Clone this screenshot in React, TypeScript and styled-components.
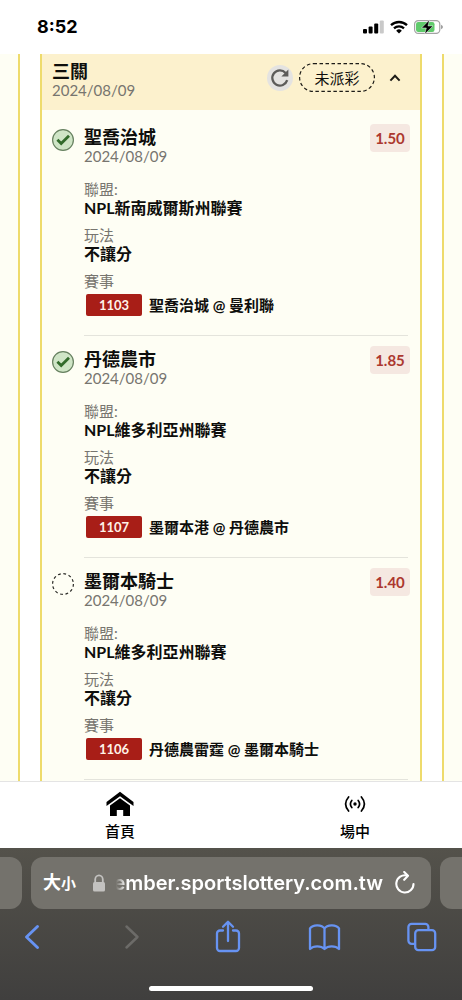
import React from 'react';
import styled, { createGlobalStyle } from 'styled-components';

const textFont = 'Lato, "Noto Sans CJK TC", sans-serif';
const systemFont = 'Inter, "Noto Sans CJK TC", sans-serif';

const GlobalStyle = createGlobalStyle`
  *, *::before, *::after { box-sizing: border-box; }
  body { margin: 0; background: #fff; color: #0e0e0c; font-family: ${textFont}; }
  button { font: inherit; color: inherit; background: none; border: 0; padding: 0; margin: 0; cursor: pointer; }
  svg { display: block; flex: none; }
  h1, h2, dl, dd, ul { margin: 0; padding: 0; }
`;

const Screen = styled.div`
  display: flex;
  flex-direction: column;
  height: 100vh;
`;

const StatusBar = styled.header`
  display: flex;
  flex: none;
  align-items: center;
  justify-content: space-between;
  height: 54px;
  padding: 0 19px 0 37px;
  background: #fff;
  font-family: ${systemFont};
`;

const Clock = styled.time`
  color: #000;
  font-size: 18px;
  line-height: 22px;
  font-weight: 700;
`;

const StatusIcons = styled.div`
  display: flex;
  align-items: center;
  gap: 6px;
`;

const Carousel = styled.main`
  display: flex;
  flex: 1;
  gap: 20px;
  min-height: 0;
  overflow: hidden;
`;

const PeekCard = styled.div<{ $side: 'left' | 'right' }>`
  flex: none;
  width: 20px;
  background: #fefef4;
  border: 0 solid #eedb6c;
  border-${(p) => (p.$side === 'left' ? 'right' : 'left')}-width: 2px;
`;

const TicketCard = styled.section`
  flex: 1;
  min-width: 0;
  background: #fefef4;
  border: 0 solid #eedb6c;
  border-width: 0 2px;
  overflow: hidden;
`;

const TicketHeader = styled.div`
  display: flex;
  align-items: flex-start;
  justify-content: space-between;
  padding: 6px 18px 12px 10px;
  background: #fcf1cd;
`;

const Title = styled.h1`
  font-size: 18px;
  line-height: 22px;
  font-weight: 700;
`;

const LegTitle = styled.h2`
  font-size: 18px;
  line-height: 22px;
  font-weight: 700;
`;

const DateText = styled.time`
  display: block;
  color: #77756f;
  font-size: 15px;
  line-height: 16px;
`;

const HeaderActions = styled.div`
  display: flex;
  align-items: center;
  gap: 6px;
  padding-top: 3px;
`;

const RoundButton = styled.button`
  display: grid;
  place-items: center;
  width: 26px;
  height: 26px;
  border-radius: 50%;
  background: #e4e3e1;
`;

const StatusPill = styled.span`
  position: relative;
  display: grid;
  place-items: center;
  width: 76px;
  height: 29px;
  font-size: 15px;
  line-height: 20px;
`;

const PillOutline = styled.svg`
  position: absolute;
  inset: 0;
`;

const ToggleButton = styled.button`
  display: grid;
  place-items: center;
  width: 14px;
  height: 26px;
  margin-left: 7px;
`;

const LegList = styled.ul`
  padding-top: 4px;
  list-style: none;
`;

const Leg = styled.li`
  display: flex;
  gap: 10px;
  padding: 12px 10px 0;
`;

const LegState = styled.span`
  padding-top: 3px;
`;

const LegContent = styled.div`
  flex: 1;
  min-width: 0;
`;

const LegHeading = styled.div`
  display: flex;
  align-items: flex-start;
  justify-content: space-between;
`;

const Odds = styled.strong`
  display: grid;
  place-items: center;
  width: 40px;
  height: 28px;
  margin-top: -2px;
  border-radius: 4px;
  background: #f5e8e1;
  color: #ac382f;
  font-size: 15px;
  line-height: 20px;
  font-weight: 700;
`;

const Facts = styled.dl`
  display: grid;
  gap: 8px;
  margin-right: 2px;
  padding: 16px 0 19px;
  border-bottom: 1px solid #e4e4dc;
`;

const FactLabel = styled.dt`
  color: #77756f;
  font-size: 15px;
  line-height: 18px;
`;

const FactValue = styled.dd`
  font-size: 16px;
  line-height: 20px;
  font-weight: 700;
`;

const MatchValue = styled.dd`
  display: flex;
  align-items: center;
  gap: 7px;
  margin: 4px 0 0 2px;
  font-size: 15px;
  line-height: 22px;
  font-weight: 700;
`;

const MatchCode = styled.span`
  width: 56px;
  border-radius: 2px;
  background: #a81e17;
  color: #fff2e8;
  font-size: 13px;
  text-align: center;
`;

const SiteNav = styled.nav`
  display: flex;
  flex: none;
  justify-content: space-between;
  height: 67px;
  padding: 9px 71px 0 84px;
  border-top: 1px solid #e4e4e4;
  background: #fff;
`;

const NavLink = styled.a`
  display: flex;
  flex-direction: column;
  align-items: center;
  gap: 4px;
  width: 72px;
  color: #000;
  font-size: 15px;
  line-height: 20px;
  font-weight: 500;
  text-decoration: none;
`;

const Browser = styled.footer`
  flex: none;
  padding: 9px 0;
  background: linear-gradient(#54524b, #403f3e);
  color: #fff;
  font-family: ${systemFont};
`;

const TabStrip = styled.div`
  display: flex;
  gap: 9px;
`;

const PeekTab = styled.div<{ $side: 'left' | 'right' }>`
  flex: none;
  width: 22px;
  height: 52px;
  border-radius: ${(p) => (p.$side === 'left' ? '0 12px 12px 0' : '12px 0 0 12px')};
  background: #74726c;
`;

const AddressBar = styled.div`
  display: flex;
  flex: 1;
  align-items: center;
  min-width: 0;
  height: 52px;
  padding: 0 16px 0 12px;
  border-radius: 12px;
  background: #74726c;
`;

const TextSizeButton = styled.button`
  display: flex;
  align-items: baseline;
  margin-right: 16px;
  font-size: 18px;
  line-height: 24px;
  font-weight: 700;
`;

const SmallGlyph = styled.span`
  font-size: 15px;
`;

const Address = styled.input`
  flex: 1;
  min-width: 0;
  margin: 0 12px 0 3px;
  padding: 0;
  border: 0;
  outline: 0;
  background: none;
  color: #fff;
  font-family: ${systemFont};
  font-size: 20px;
  line-height: 28px;
  font-weight: 600;
  font-variant-ligatures: none;
  text-align: right;
  mask-image: linear-gradient(90deg, transparent 7px, #000 17px);
`;

const Toolbar = styled.div`
  display: flex;
  justify-content: space-between;
  padding: 8px 21px 0 12px;
  color: #6793f2;
`;

const ToolButton = styled.button`
  width: 40px;
  height: 40px;
  &:disabled { color: #6c6b68; }
`;

const HomeIndicator = styled.div`
  width: 164px;
  height: 5px;
  margin: 29px auto 0;
  border-radius: 3px;
  background: #fff;
`;

type LegData = { team: string; odds: string; league: string; code: string; match: string; won: boolean };

const legs: LegData[] = [
  { team: '聖喬治城', odds: '1.50', league: 'NPL新南威爾斯州聯賽', code: '1103', match: '聖喬治城 @ 曼利聯', won: true },
  { team: '丹德農市', odds: '1.85', league: 'NPL維多利亞州聯賽', code: '1107', match: '墨爾本港 @ 丹德農市', won: true },
  { team: '墨爾本騎士', odds: '1.40', league: 'NPL維多利亞州聯賽', code: '1106', match: '丹德農雷霆 @ 墨爾本騎士', won: false },
];

const WonIcon = () => (
  <svg width="22" height="22" viewBox="0 0 22 22" fill="none" role="img" aria-label="過關">
    <circle cx="11" cy="11" r="10.4" fill="#cfe5c6" stroke="#66805f" strokeWidth="1.2" />
    <path d="M5.400 10.800l3.800 3.800L17 6.800" stroke="#326b2b" strokeWidth="2.800" />
  </svg>
);

const PendingIcon = () => (
  <svg width="22" height="22" viewBox="0 0 22 22" fill="none" role="img" aria-label="未開賽">
    <circle cx="11" cy="11" r="10.4" stroke="#2a2a26" strokeWidth="1.2" strokeDasharray="2.800 2.650" />
  </svg>
);

const LegItem = ({ leg }: { leg: LegData }) => (
  <Leg>
    <LegState>{leg.won ? <WonIcon /> : <PendingIcon />}</LegState>
    <LegContent>
      <LegHeading>
        <div>
          <LegTitle>{leg.team}</LegTitle>
          <DateText dateTime="2024-08-09">2024/08/09</DateText>
        </div>
        <Odds>{leg.odds}</Odds>
      </LegHeading>
      <Facts>
        <div>
          <FactLabel>聯盟:</FactLabel>
          <FactValue>{leg.league}</FactValue>
        </div>
        <div>
          <FactLabel>玩法</FactLabel>
          <FactValue>不讓分</FactValue>
        </div>
        <div>
          <FactLabel>賽事</FactLabel>
          <MatchValue>
            <MatchCode>{leg.code}</MatchCode>
            <span>{leg.match}</span>
          </MatchValue>
        </div>
      </Facts>
    </LegContent>
  </Leg>
);

export default function App() {
  return (
    <Screen>
      <GlobalStyle />
      <StatusBar>
        <Clock>8:52</Clock>
        <StatusIcons>
          <svg width="21" height="14" viewBox="0 0 21 14" fill="#000">
            <rect x="0" y="9" width="4" height="4.500" rx="1" />
            <rect x="5.600" y="6.500" width="4" height="7" rx="1" />
            <rect x="11.200" y="3.500" width="4" height="10" rx="1" />
            <rect x="16.800" y="0.500" width="4" height="13" rx="1" fill="#c9c9c9" />
          </svg>
          <svg width="18" height="14" viewBox="0 0 18 14" fill="none" stroke="#000" strokeWidth="2.300">
            <path d="M1 5.200a11.600 11.600 0 0 1 16 0" />
            <path d="M4 8.300a7.300 7.300 0 0 1 10 0" />
            <path d="M9 13.500L6.200 10.700a4 4 0 0 1 5.600 0z" fill="#000" stroke="none" />
          </svg>
          <svg width="29" height="16" viewBox="0 0 29 16">
            <rect x="0.600" y="1.600" width="25.200" height="12.800" rx="3.600" fill="#fff" stroke="#a3a3a3" strokeWidth="1.200" />
            <rect x="2" y="3" width="18.500" height="10" rx="2.200" fill="#5fcb6b" />
            <path d="M27.200 5.800q1.600 0.700 1.600 2.200t-1.600 2.200z" fill="#8a8a8a" />
            <path d="M15.500 0.800L7.500 9h4.800l-1.600 6.200L19 6.900h-5z" fill="#000" stroke="#fff" strokeWidth="0.500" />
          </svg>
        </StatusIcons>
      </StatusBar>

      <Carousel>
        <PeekCard $side="left" />
        <TicketCard>
          <TicketHeader>
            <div>
              <Title>三關</Title>
              <DateText dateTime="2024-08-09">2024/08/09</DateText>
            </div>
            <HeaderActions>
              <RoundButton aria-label="重新整理">
                <svg width="20" height="20" viewBox="0 0 20 20" fill="none" stroke="#5d5c5a" strokeWidth="2.300">
                  <path d="M17.200 12.200A7.600 7.600 0 1 1 15.600 4.900" />
                  <path d="M18.400 1.500v7h-7z" fill="#5d5c5a" stroke="none" />
                </svg>
              </RoundButton>
              <StatusPill>
                <PillOutline width="76" height="29" viewBox="0 0 76 29" fill="none" stroke="#1c1b17" strokeWidth="1.200" strokeDasharray="3.500 2.500">
                  <rect x="0.600" y="0.600" width="74.800" height="27.800" rx="13.900" />
                </PillOutline>
                未派彩
              </StatusPill>
              <ToggleButton aria-label="收合">
                <svg width="12" height="8" viewBox="0 0 12 8" fill="none" stroke="#1c1b17" strokeWidth="2">
                  <path d="M1.400 6.600L6 1.800l4.600 4.800" />
                </svg>
              </ToggleButton>
            </HeaderActions>
          </TicketHeader>
          <LegList>
            {legs.map((leg) => (
              <LegItem key={leg.code} leg={leg} />
            ))}
          </LegList>
        </TicketCard>
        <PeekCard $side="right" />
      </Carousel>

      <SiteNav>
        <NavLink href="#home">
          <svg width="28" height="26" viewBox="0 0 28 26">
            <path d="M14 0.800L0.500 11v4L14 5.200L27.500 15v-4z" fill="#000" />
            <path d="M14 7.200L4 14.400V25h6.800v-6h6.400v6H24V14.400z" fill="#000" />
          </svg>
          首頁
        </NavLink>
        <NavLink href="#live">
          <svg width="26" height="26" viewBox="0 0 26 26" fill="none" stroke="#000" strokeWidth="1.700" strokeLinecap="round">
            <circle cx="13" cy="13" r="1.700" fill="#000" stroke="none" />
            <path d="M9.800 9.400q-2.800 3.600 0 7.200M16.200 9.400q2.800 3.600 0 7.200M6.600 6q-6 7 0 14M19.400 6q6 7 0 14" />
          </svg>
          場中
        </NavLink>
      </SiteNav>

      <Browser>
        <TabStrip>
          <PeekTab $side="left" />
          <AddressBar>
            <TextSizeButton aria-label="文字大小">
              大<SmallGlyph>小</SmallGlyph>
            </TextSizeButton>
            <svg width="14" height="18" viewBox="0 0 14 18">
              <path d="M3.200 9V5.600a3.800 4.200 0 0 1 7.600 0V9" fill="none" stroke="#c3c2c0" strokeWidth="1.800" />
              <rect x="1" y="8" width="12" height="9.500" rx="1.600" fill="#c3c2c0" />
            </svg>
            <Address aria-label="網址" readOnly value="ember.sportslottery.com.tw" />
            <button aria-label="重新載入">
              <svg width="20" height="24" viewBox="0 0 20 24" fill="none" stroke="#fff" strokeWidth="2.100" strokeLinecap="round" strokeLinejoin="round">
                <path d="M12 4.600A8.600 8.600 0 1 0 18.500 13" />
                <path d="M9.200 1l3.800 3.800L9.200 8.800" />
              </svg>
            </button>
          </AddressBar>
          <PeekTab $side="right" />
        </TabStrip>
        <Toolbar>
          <ToolButton aria-label="上一頁">
            <svg width="40" height="40" viewBox="0 0 40 40" fill="none" stroke="currentColor" strokeWidth="2.900" strokeLinecap="round" strokeLinejoin="round">
              <path d="M25.500 9.500L14.500 20l11 10.500" />
            </svg>
          </ToolButton>
          <ToolButton aria-label="下一頁" disabled>
            <svg width="40" height="40" viewBox="0 0 40 40" fill="none" stroke="currentColor" strokeWidth="2.500" strokeLinecap="round" strokeLinejoin="round">
              <path d="M17.500 9.500L28.500 20l-11 10.500" />
            </svg>
          </ToolButton>
          <ToolButton aria-label="分享">
            <svg width="40" height="40" viewBox="0 0 40 40" fill="none" stroke="currentColor" strokeWidth="2.300" strokeLinecap="round" strokeLinejoin="round">
              <path d="M16 13.500H13a3 3 0 0 0-3 3V31a3 3 0 0 0 3 3h16a3 3 0 0 0 3-3V16.500a3 3 0 0 0-3-3h-3" />
              <path d="M21 24V5M16 9.800l5-5 5 5" />
            </svg>
          </ToolButton>
          <ToolButton aria-label="書籤">
            <svg width="40" height="40" viewBox="0 0 40 40" fill="none" stroke="currentColor" strokeWidth="2.300" strokeLinejoin="round">
              <path d="M20.500 11.500C18 7.500 9 7 6 11.300V32c3.500-3.600 11-3.600 14.500 0c3.500-3.600 11-3.600 14.500 0V11.300C32 7 23 7.500 20.500 11.500zV32" />
            </svg>
          </ToolButton>
          <ToolButton aria-label="分頁">
            <svg width="40" height="40" viewBox="0 0 40 40" fill="none" stroke="currentColor" strokeWidth="2.300" strokeLinejoin="round">
              <rect x="14.200" y="13.200" width="20" height="20" rx="3.200" />
              <path d="M14 26.800h-3.400a3.200 3.200 0 0 1-3.200-3.200V10a3.200 3.200 0 0 1 3.200-3.200h13.600A3.200 3.200 0 0 1 27.400 10v3.200" />
            </svg>
          </ToolButton>
        </Toolbar>
        <HomeIndicator />
      </Browser>
    </Screen>
  );
}
